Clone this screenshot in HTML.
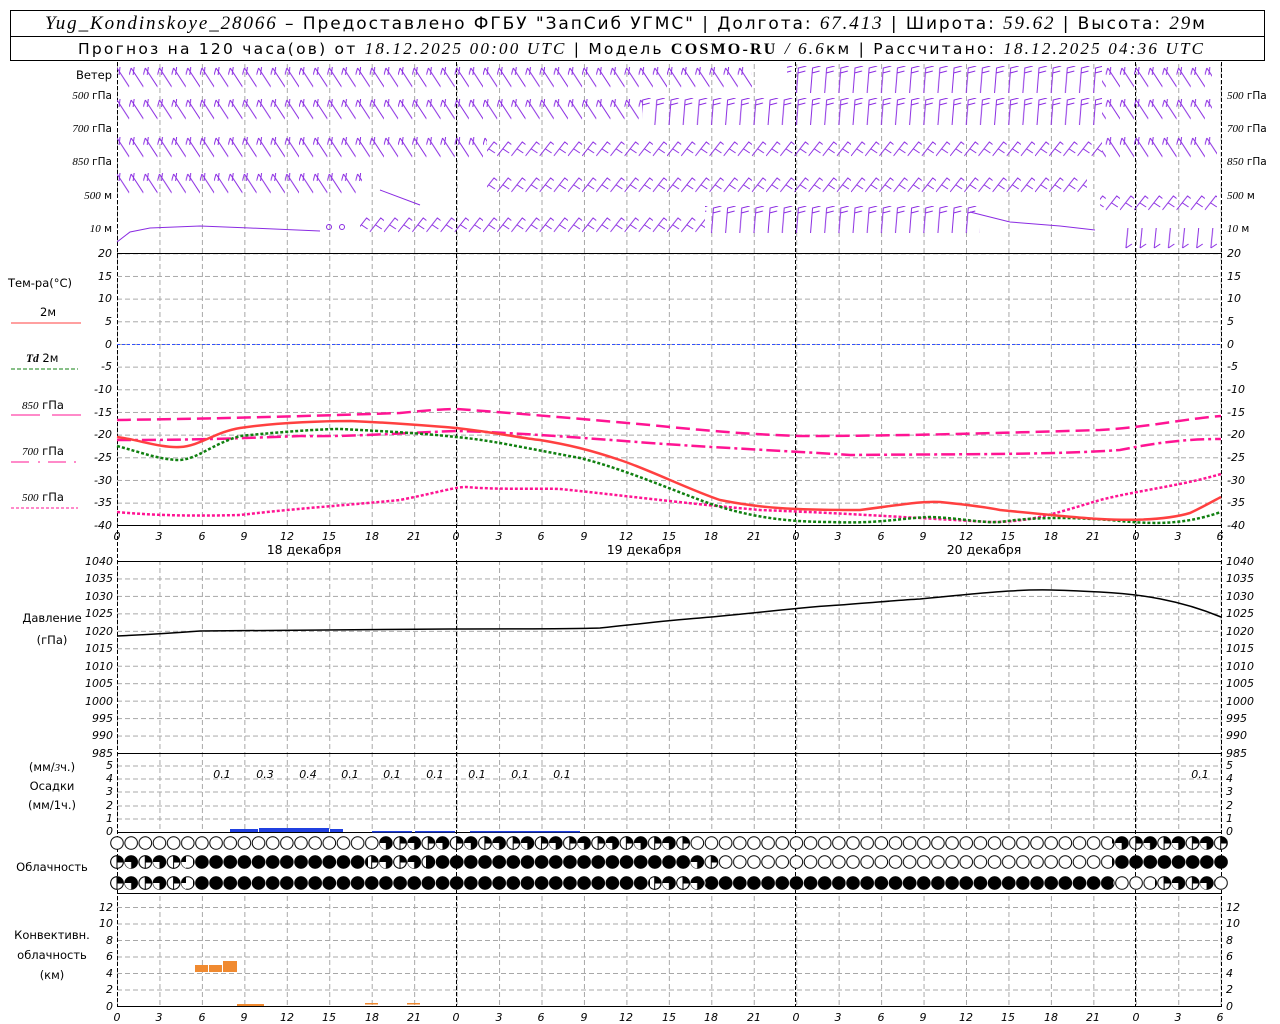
<!DOCTYPE html>
<html><head><meta charset="utf-8"><style>
body{margin:0;background:#fff;width:1280px;height:1024px;overflow:hidden}
svg{display:block}
text{font-family:"DejaVu Sans","Liberation Sans",sans-serif;fill:#000}
.ax{font-family:"Liberation Serif",serif;font-style:italic;font-size:11px}
.lb{font-size:11.5px}
.hd{font-size:17px}
</style></head><body>
<svg width="1280" height="1024" viewBox="0 0 1280 1024" xmlns="http://www.w3.org/2000/svg">
<defs>
<pattern id="vg" patternUnits="userSpaceOnUse" x="117" y="0" width="42.45" height="1024"><line x1="0.5" y1="0" x2="0.5" y2="1024" stroke="#a8a8a8" stroke-dasharray="5,3"/></pattern>
<pattern id="hgT" patternUnits="userSpaceOnUse" x="117" y="253.3" width="8" height="22.667"><line x1="0" y1="0.5" x2="8" y2="0.5" stroke="#a8a8a8" stroke-dasharray="5,3"/></pattern>
<pattern id="hgP" patternUnits="userSpaceOnUse" x="117" y="561" width="8" height="17.455"><line x1="0" y1="0.5" x2="8" y2="0.5" stroke="#a8a8a8" stroke-dasharray="5,3"/></pattern>
<pattern id="hgC" patternUnits="userSpaceOnUse" x="117" y="907" width="8" height="16.5"><line x1="0" y1="0.5" x2="8" y2="0.5" stroke="#a8a8a8" stroke-dasharray="5,3"/></pattern>
<pattern id="cw" patternUnits="userSpaceOnUse" x="110" y="0" width="14.154" height="20"><circle cx="7" cy="7" r="6.3" fill="#fff" stroke="#000" stroke-width="1"/></pattern>
<pattern id="cb" patternUnits="userSpaceOnUse" x="110" y="0" width="14.154" height="20"><circle cx="7" cy="7" r="6.6" fill="#000"/></pattern>
<pattern id="cp" patternUnits="userSpaceOnUse" x="110" y="0" width="28.3" height="20"><circle cx="7" cy="7" r="6.3" fill="#fff" stroke="#000"/><path d="M7,0.7 L7,13.3 M7,7 L13.3,7" stroke="#000"/><path d="M7,7 L7,0.7 A6.3,6.3 0 0 1 13.3,7 Z" fill="#000"/><circle cx="21.15" cy="7" r="6.6" fill="#000"/><path d="M21.15,7 L21.15,13.3 A6.3,6.3 0 0 1 14.85,7Z" fill="#fff"/></pattern>
<pattern id="bA" patternUnits="userSpaceOnUse" x="115" y="0" width="14.154" height="40"><path d="M2,2 L15,22 M2,2 L0,9 M5,1 L4,9" stroke="#8a2be2" fill="none" stroke-width="1"/></pattern>
<pattern id="bF" patternUnits="userSpaceOnUse" x="115" y="0" width="14.154" height="40"><path d="M2,27 L4,2 L12,0 M3.5,7 L11,5" stroke="#8a2be2" fill="none" stroke-width="1"/></pattern>
<pattern id="bZ" patternUnits="userSpaceOnUse" x="115" y="0" width="14.154" height="40"><path d="M0,20 L11,6 L16,10 M6,13 L12,17" stroke="#8a2be2" fill="none" stroke-width="1"/></pattern>
<pattern id="bV" patternUnits="userSpaceOnUse" x="115" y="0" width="14.154" height="40"><path d="M8,0 L6,20 M6,20 L12,16" stroke="#8a2be2" fill="none" stroke-width="1"/></pattern>
</defs>

<!-- header -->
<rect x="10.5" y="10.5" width="1254" height="50" fill="none" stroke="#000"/>
<line x1="10" y1="36.5" x2="1265" y2="36.5" stroke="#000"/>
<text x="45" y="29" class="hd" textLength="1160" lengthAdjust="spacing"><tspan font-family="Liberation Serif" font-style="italic" font-size="19">Yug_Kondinskoye_28066</tspan> – Предоставлено ФГБУ "ЗапСиб УГМС" | Долгота: <tspan font-family="Liberation Serif" font-style="italic" font-size="19">67.413</tspan> | Широта: <tspan font-family="Liberation Serif" font-style="italic" font-size="19">59.62</tspan> | Высота: <tspan font-family="Liberation Serif" font-style="italic" font-size="19">29</tspan>м</text>
<text x="78" y="54" font-size="15.5" textLength="1125" lengthAdjust="spacing">Прогноз на 120 часа(ов) от <tspan font-family="Liberation Serif" font-style="italic" font-size="17">18.12.2025 00:00 UTC</tspan> | Модель <tspan font-family="Liberation Serif" font-weight="bold" font-size="16">COSMO-RU</tspan> <tspan font-family="Liberation Serif" font-style="italic" font-size="17">/ 6.6</tspan>км | Рассчитано: <tspan font-family="Liberation Serif" font-style="italic" font-size="17">18.12.2025 04:36 UTC</tspan></text>

<!-- grids -->
<rect x="117" y="62" width="1105" height="192" fill="url(#vg)"/>
<rect x="117" y="253" width="1105" height="273" fill="url(#vg)"/>
<rect x="117" y="253" width="1105" height="273" fill="url(#hgT)"/>
<rect x="117" y="561" width="1105" height="272" fill="url(#vg)"/>
<rect x="117" y="561" width="1105" height="192" fill="url(#hgP)"/>
<rect x="117" y="893" width="1105" height="114" fill="url(#vg)"/>
<rect x="117" y="907" width="1105" height="100" fill="url(#hgC)"/>
<g stroke="#a8a8a8" stroke-dasharray="5,3"><line x1="117" y1="766" x2="1221" y2="766"/><line x1="117" y1="779" x2="1221" y2="779"/><line x1="117" y1="792" x2="1221" y2="792"/><line x1="117" y1="806" x2="1221" y2="806"/><line x1="117" y1="819" x2="1221" y2="819"/></g>
<g stroke="#000" stroke-dasharray="4,2"><line x1="117.5" y1="62" x2="117.5" y2="1007"/><line x1="456.5" y1="62" x2="456.5" y2="1007"/><line x1="795.5" y1="62" x2="795.5" y2="1007"/><line x1="1135.5" y1="62" x2="1135.5" y2="1007"/><line x1="1221.5" y1="62" x2="1221.5" y2="1007"/></g>
<g stroke="#000"><line x1="117" y1="253.5" x2="1222" y2="253.5"/><line x1="117" y1="525.5" x2="1222" y2="525.5"/><line x1="117" y1="561.5" x2="1222" y2="561.5"/><line x1="117" y1="753.5" x2="1222" y2="753.5"/><line x1="117" y1="832.5" x2="1222" y2="832.5"/><line x1="117" y1="893.5" x2="1222" y2="893.5"/><line x1="117" y1="1006.5" x2="1222" y2="1006.5"/></g>
<line x1="117" y1="344.5" x2="1221" y2="344.5" stroke="#3050ff" stroke-dasharray="3,2"/>

<!-- wind barbs -->
<g transform="translate(0,66)"><rect x="117" y="0" width="345" height="26" fill="url(#bA)"/><rect x="462" y="0" width="290" height="28" fill="url(#bA)"/><rect x="787" y="0" width="315" height="28" fill="url(#bF)"/><rect x="1102" y="0" width="110" height="30" fill="url(#bA)"/></g>
<g transform="translate(0,98)"><rect x="117" y="0" width="525" height="32" fill="url(#bA)"/><rect x="642" y="0" width="460" height="30" fill="url(#bF)"/><rect x="1102" y="0" width="110" height="36" fill="url(#bA)"/></g>
<g transform="translate(0,136)"><rect x="117" y="0" width="370" height="26" fill="url(#bA)"/><rect x="487" y="0" width="615" height="26" fill="url(#bZ)"/><rect x="1102" y="0" width="115" height="26" fill="url(#bA)"/></g>
<g transform="translate(0,172)"><rect x="117" y="0" width="245" height="30" fill="url(#bA)"/><rect x="487" y="0" width="600" height="28" fill="url(#bZ)"/></g>
<g transform="translate(0,190)"><rect x="1100" y="0" width="117" height="26" fill="url(#bZ)"/></g>
<line x1="380" y1="190" x2="420" y2="205" stroke="#8a2be2"/>
<path d="M117,242 L130,232 L150,228 L200,226 L250,228 L320,231" stroke="#8a2be2" fill="none"/>
<circle cx="329" cy="227" r="2.5" fill="none" stroke="#8a2be2"/><circle cx="342" cy="227" r="2.5" fill="none" stroke="#8a2be2"/>
<g transform="translate(0,212)"><rect x="360" y="0" width="345" height="28" fill="url(#bZ)"/></g>
<g transform="translate(0,206)"><rect x="705" y="0" width="275" height="30" fill="url(#bF)"/></g>
<g transform="translate(0,228)"><rect x="1125" y="0" width="92" height="24" fill="url(#bV)"/></g>
<path d="M970,212 L1010,222 L1060,226 L1095,230" stroke="#8a2be2" fill="none"/>

<!-- wind labels -->
<g class="lb" text-anchor="end"><text x="112" y="79">Ветер</text></g>
<g font-size="10.5"><text x="112" y="99" text-anchor="end"><tspan class="ax">500</tspan> гПа</text><text x="112" y="132" text-anchor="end"><tspan class="ax">700</tspan> гПа</text><text x="112" y="165" text-anchor="end"><tspan class="ax">850</tspan> гПа</text><text x="112" y="199" text-anchor="end"><tspan class="ax">500</tspan> м</text><text x="112" y="232" text-anchor="end"><tspan class="ax">10</tspan>   м</text>
<text x="1227" y="99"><tspan class="ax">500</tspan> гПа</text><text x="1227" y="132"><tspan class="ax">700</tspan> гПа</text><text x="1227" y="165"><tspan class="ax">850</tspan> гПа</text><text x="1227" y="199"><tspan class="ax">500</tspan> м</text><text x="1227" y="232"><tspan class="ax">10</tspan>   м</text></g>

<!-- temp axis -->
<g class="ax" font-size="10" text-anchor="end">
<text x="112" y="257">20</text><text x="112" y="280">15</text><text x="112" y="302">10</text><text x="112" y="325">5</text><text x="112" y="348">0</text><text x="112" y="370">-5</text><text x="112" y="393">-10</text><text x="112" y="416">-15</text><text x="112" y="438">-20</text><text x="112" y="461">-25</text><text x="112" y="484">-30</text><text x="112" y="506">-35</text><text x="112" y="529">-40</text></g>
<g class="ax" font-size="10">
<text x="1227" y="257">20</text><text x="1227" y="280">15</text><text x="1227" y="302">10</text><text x="1227" y="325">5</text><text x="1227" y="348">0</text><text x="1227" y="370">-5</text><text x="1227" y="393">-10</text><text x="1227" y="416">-15</text><text x="1227" y="438">-20</text><text x="1227" y="461">-25</text><text x="1227" y="484">-30</text><text x="1227" y="506">-35</text><text x="1227" y="529">-40</text></g>
<g class="lb"><text x="8" y="287">Тем-ра(°C)</text><text x="40" y="316">2м</text><text x="26" y="362"><tspan font-family="Liberation Serif" font-weight="bold" font-style="italic">Td</tspan>  2м</text><text x="22" y="409"><tspan class="ax">850</tspan> гПа</text><text x="22" y="455"><tspan class="ax">700</tspan> гПа</text><text x="22" y="501"><tspan class="ax">500</tspan> гПа</text></g>
<line x1="11" y1="323" x2="81" y2="323" stroke="#ff4040"/>
<line x1="11" y1="369" x2="78" y2="369" stroke="#108010" stroke-dasharray="4,2"/>
<path d="M11,415 H40 M52,415 H81" stroke="#ff1493"/>
<path d="M11,462 H29 M38,462 H40 M48,462 H66 M74,462 H76" stroke="#ff1493"/>
<line x1="11" y1="508" x2="78" y2="508" stroke="#ff1493" stroke-dasharray="3,2"/>

<!-- temp curves -->
<path d="M117,420 C180,419 250,418 400,413 C430,410 445,409 456,409 C500,412 560,417 650,425 C700,430 740,434 800,436 C900,436 1000,433 1100,430 C1150,427 1190,418 1221,416" stroke="#ff1493" stroke-width="2.5" fill="none" stroke-dasharray="14,6"/>
<path d="M117,440 C160,440 200,440 300,436 C350,437 400,433 456,431 C500,432 560,436 650,443 C720,448 790,451 850,455 C950,454 1050,455 1120,450 C1150,444 1180,439 1221,439" stroke="#ff1493" stroke-width="2.5" fill="none" stroke-dasharray="14,4,3,4"/>
<path d="M117,512 C160,516 200,516 240,515 C300,508 350,505 400,500 C440,492 455,487 466,487 C500,490 540,488 560,489 C620,495 680,503 760,510 C840,513 900,517 990,522 C1030,522 1050,515 1100,500 C1140,490 1180,486 1221,474" stroke="#ff1493" stroke-width="2.5" fill="none" stroke-dasharray="3,2"/>
<path d="M117,446 C140,452 160,460 180,460 C200,458 210,445 240,436 C280,432 320,429 340,429 C380,431 420,433 456,437 C490,440 520,447 580,458 C620,468 660,485 700,500 C740,515 780,522 830,522 C880,524 900,518 930,517 C960,518 980,523 1000,522 C1040,516 1080,518 1110,520 C1150,524 1180,526 1221,512" stroke="#108010" stroke-width="2.5" fill="none" stroke-dasharray="3,2"/>
<path d="M117,437 C140,440 160,448 180,447 C200,446 215,432 240,428 C280,422 330,421 350,421 C400,423 430,426 456,428 C500,433 520,438 540,440 C570,445 590,450 620,460 C650,470 690,490 720,500 C760,508 790,510 860,510 C900,505 920,501 940,502 C970,505 990,508 1000,510 C1040,514 1080,518 1100,519 C1140,521 1170,519 1190,513 C1205,506 1215,500 1221,497" stroke="#ff4040" stroke-width="2.5" fill="none"/>

<!-- x labels -->
<g class="ax" font-size="13" text-anchor="middle">
<text x="117" y="540">0</text><text x="159" y="540">3</text><text x="202" y="540">6</text><text x="244" y="540">9</text><text x="287" y="540">12</text><text x="329" y="540">15</text><text x="372" y="540">18</text><text x="414" y="540">21</text><text x="456" y="540">0</text><text x="499" y="540">3</text><text x="541" y="540">6</text><text x="584" y="540">9</text><text x="626" y="540">12</text><text x="669" y="540">15</text><text x="711" y="540">18</text><text x="754" y="540">21</text><text x="796" y="540">0</text><text x="838" y="540">3</text><text x="881" y="540">6</text><text x="923" y="540">9</text><text x="966" y="540">12</text><text x="1008" y="540">15</text><text x="1051" y="540">18</text><text x="1093" y="540">21</text><text x="1136" y="540">0</text><text x="1178" y="540">3</text><text x="1220" y="540">6</text></g>
<g font-size="12.5" text-anchor="middle"><text x="304" y="554">18 декабря</text><text x="644" y="554">19 декабря</text><text x="984" y="554">20 декабря</text></g>

<!-- pressure -->
<g class="ax" font-size="9" text-anchor="end">
<text x="113" y="565">1040</text><text x="113" y="582">1035</text><text x="113" y="600">1030</text><text x="113" y="617">1025</text><text x="113" y="635">1020</text><text x="113" y="652">1015</text><text x="113" y="670">1010</text><text x="113" y="687">1005</text><text x="113" y="705">1000</text><text x="113" y="722">995</text><text x="113" y="739">990</text><text x="113" y="757">985</text></g>
<g class="ax" font-size="9">
<text x="1226" y="565">1040</text><text x="1226" y="582">1035</text><text x="1226" y="600">1030</text><text x="1226" y="617">1025</text><text x="1226" y="635">1020</text><text x="1226" y="652">1015</text><text x="1226" y="670">1010</text><text x="1226" y="687">1005</text><text x="1226" y="705">1000</text><text x="1226" y="722">995</text><text x="1226" y="739">990</text><text x="1226" y="757">985</text></g>
<g class="lb" text-anchor="middle"><text x="52" y="622">Давление</text><text x="52" y="644">(гПа)</text></g>
<path d="M117,636 C140,635 160,634 200,631 C250,630 300,630 450,629 C520,629 570,629 600,628 C640,624 660,621 700,618 C760,613 800,607 840,605 C880,602 900,600 920,599 C960,595 990,592 1010,591 C1040,589 1060,590 1100,592 C1140,594 1180,600 1221,617" stroke="#000" stroke-width="1.5" fill="none"/>

<!-- precip -->
<g class="ax" font-size="9" text-anchor="end"><text x="113" y="769">5</text><text x="113" y="782">4</text><text x="113" y="795">3</text><text x="113" y="809">2</text><text x="113" y="822">1</text><text x="113" y="835">0</text></g>
<g class="ax" font-size="9"><text x="1226" y="769">5</text><text x="1226" y="782">4</text><text x="1226" y="795">3</text><text x="1226" y="809">2</text><text x="1226" y="822">1</text><text x="1226" y="835">0</text></g>
<g class="lb" text-anchor="middle"><text x="52" y="771">(мм/<tspan class="ax">3</tspan>ч.)</text><text x="52" y="790">Осадки</text><text x="52" y="809">(мм/1ч.)</text></g>
<g class="ax" font-size="12.5" text-anchor="middle"><text x="222" y="778">0.1</text><text x="265" y="778">0.3</text><text x="308" y="778">0.4</text><text x="350" y="778">0.1</text><text x="392" y="778">0.1</text><text x="435" y="778">0.1</text><text x="477" y="778">0.1</text><text x="520" y="778">0.1</text><text x="562" y="778">0.1</text><text x="1200" y="778">0.1</text></g>
<g fill="#2040e0"><rect x="230" y="829" width="28" height="3"/><rect x="259" y="828" width="70" height="4"/><rect x="330" y="829" width="13" height="3"/><rect x="372" y="831" width="40" height="1.5"/><rect x="415" y="831" width="40" height="1.5"/><rect x="470" y="831" width="110" height="1.5"/></g>

<!-- clouds -->
<g transform="translate(0,836)">
<rect x="110" y="0" width="1118" height="15" fill="url(#cw)"/>
<rect x="380" y="0" width="310" height="15" fill="url(#cp)"/>
<rect x="1112" y="0" width="116" height="15" fill="url(#cp)"/>
</g>
<g transform="translate(0,855)">
<rect x="110" y="0" width="1118" height="15" fill="url(#cw)"/>
<rect x="110" y="0" width="76" height="15" fill="url(#cp)"/>
<rect x="193" y="0" width="175" height="15" fill="url(#cb)"/>
<rect x="369" y="0" width="56" height="15" fill="url(#cp)"/>
<rect x="426" y="0" width="264" height="15" fill="url(#cb)"/>
<rect x="690" y="0" width="28" height="15" fill="url(#cp)"/>
<rect x="1112" y="0" width="116" height="15" fill="url(#cb)"/>
</g>
<g transform="translate(0,876)">
<rect x="110" y="0" width="1118" height="15" fill="url(#cw)"/>
<rect x="110" y="0" width="76" height="15" fill="url(#cp)"/>
<rect x="193" y="0" width="920" height="15" fill="url(#cb)"/>
<rect x="650" y="0" width="56" height="15" fill="url(#cp)"/>
<rect x="1155" y="0" width="60" height="15" fill="url(#cp)"/>
</g>
<text x="52" y="871" class="lb" text-anchor="middle">Облачность</text>

<!-- convective -->
<g class="ax" font-size="9" text-anchor="end"><text x="113" y="911">12</text><text x="113" y="927">10</text><text x="113" y="944">8</text><text x="113" y="960">6</text><text x="113" y="977">4</text><text x="113" y="993">2</text><text x="113" y="1010">0</text></g>
<g class="ax" font-size="9"><text x="1226" y="911">12</text><text x="1226" y="927">10</text><text x="1226" y="944">8</text><text x="1226" y="960">6</text><text x="1226" y="977">4</text><text x="1226" y="993">2</text><text x="1226" y="1010">0</text></g>
<g class="lb" text-anchor="middle"><text x="52" y="939">Конвективн.</text><text x="52" y="959">облачность</text><text x="52" y="979">(км)</text></g>
<g fill="#f08a30"><rect x="195" y="965" width="13" height="7"/><rect x="209" y="965" width="13" height="7"/><rect x="223" y="961" width="14" height="11"/><rect x="237" y="1004" width="27" height="2"/><rect x="365" y="1003" width="13" height="1.5"/><rect x="407" y="1003" width="13" height="1.5"/></g>
<g class="ax" font-size="13" text-anchor="middle">
<text x="117" y="1021">0</text><text x="159" y="1021">3</text><text x="202" y="1021">6</text><text x="244" y="1021">9</text><text x="287" y="1021">12</text><text x="329" y="1021">15</text><text x="372" y="1021">18</text><text x="414" y="1021">21</text><text x="456" y="1021">0</text><text x="499" y="1021">3</text><text x="541" y="1021">6</text><text x="584" y="1021">9</text><text x="626" y="1021">12</text><text x="669" y="1021">15</text><text x="711" y="1021">18</text><text x="754" y="1021">21</text><text x="796" y="1021">0</text><text x="838" y="1021">3</text><text x="881" y="1021">6</text><text x="923" y="1021">9</text><text x="966" y="1021">12</text><text x="1008" y="1021">15</text><text x="1051" y="1021">18</text><text x="1093" y="1021">21</text><text x="1136" y="1021">0</text><text x="1178" y="1021">3</text><text x="1220" y="1021">6</text></g>
</svg>
</body></html>
